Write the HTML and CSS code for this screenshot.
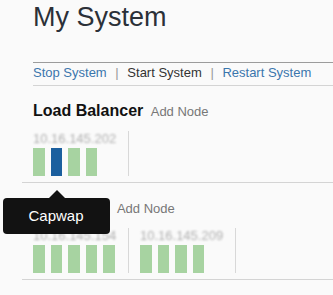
FILE: index.html
```html
<!DOCTYPE html>
<html lang="en">
<head>
    <meta charset="UTF-8">
    <meta name="viewport" content="width=device-width, initial-scale=1.0">
    <title>My System</title>
    <link rel="stylesheet" href="styles.css">
</head>
<body>
    <div class="page">
        <h1 class="title">My System</h1>
        <div class="actions">
            <a href="#" class="link">Stop System</a>
            <span class="sep">|</span>
            <span class="current">Start System</span>
            <span class="sep">|</span>
            <a href="#" class="link">Restart System</a>
        </div>

        <div class="section">
            <div class="section-head">
                <span class="section-name">Load Balancer</span>
                <a href="#" class="add">Add Node</a>
            </div>
            <div class="nodes">
                <div class="node">
                    <div class="ip">10.16.145.202</div>
                    <div class="bars">
                        <div class="bar"></div>
                        <div class="bar active">
                            <div class="tooltip">Capwap</div>
                        </div>
                        <div class="bar"></div>
                        <div class="bar"></div>
                    </div>
                </div>
            </div>
        </div>

        <div class="section">
            <div class="section-head">
                <span class="section-name">Controller</span>
                <a href="#" class="add">Add Node</a>
            </div>
            <div class="nodes">
                <div class="node">
                    <div class="ip">10.16.145.154</div>
                    <div class="bars">
                        <div class="bar"></div>
                        <div class="bar"></div>
                        <div class="bar"></div>
                        <div class="bar"></div>
                        <div class="bar"></div>
                    </div>
                </div>
                <div class="node">
                    <div class="ip">10.16.145.209</div>
                    <div class="bars">
                        <div class="bar"></div>
                        <div class="bar"></div>
                        <div class="bar"></div>
                        <div class="bar"></div>
                    </div>
                </div>
            </div>
        </div>
    </div>
</body>
</html>
```

FILE: styles.css
```css
body{
    margin: 0;
    background-color: #fafafa;
    font-family: "Liberation Sans", Arial, sans-serif;
}
.page{
    padding-left: 22px;
}
.title{
    margin: 4px 0 0 11px;
    font-size: 27px;
    line-height: 27px;
    font-weight: normal;
    color: #2b3038;
}
.actions{
    margin: 31px 0 0 11px;
    padding: 2px 0 4px;
    border-top: 1px solid #9c9c9c;
    border-bottom: 1px solid #d4d4d4;
    font-size: 13px;
    line-height: 16px;
}
.link{
    color: #3a76ad;
    text-decoration: none;
}
.current{
    color: #333;
}
.sep{
    margin: 0 5px;
    color: #999;
}
.section{
    padding: 15px 0 6px 11px;
    border-bottom: 1px solid #d4d4d4;
}
.section-head{
    line-height: 20px;
}
.section-name{
    font-size: 16px;
    font-weight: bold;
    color: #111;
    margin-right: 3px;
}
.add{
    font-size: 13px;
    color: #777;
    text-decoration: none;
}
.nodes{
    display: flex;
    margin-top: 9px;
}
.node{
    width: 95px;
    border-right: 1px solid #d8d8d8;
    margin-right: 11px;
}
.ip{
    font-size: 13px;
    line-height: 15px;
    color: #b0b0b0;
    filter: blur(1.2px);
}
.bars{
    display: flex;
    gap: 6px;
    margin-top: 2px;
}
.bar{
    position: relative;
    width: 11.5px;
    height: 28px;
    background-color: #a7d3a1;
}
.bar.active{
    background-color: #1b5f9e;
}
.tooltip{
    position: absolute;
    top: 50px;
    left: -48px;
    width: 107px;
    height: 36px;
    line-height: 36px;
    border-radius: 4px;
    background-color: #121212;
    color: #fff;
    font-size: 15px;
    text-align: center;
    z-index: 2;
}
.tooltip::before{
    content: "";
    position: absolute;
    top: -8px;
    left: 46px;
    border-left: 8px solid transparent;
    border-right: 8px solid transparent;
    border-bottom: 8px solid #121212;
}
```
